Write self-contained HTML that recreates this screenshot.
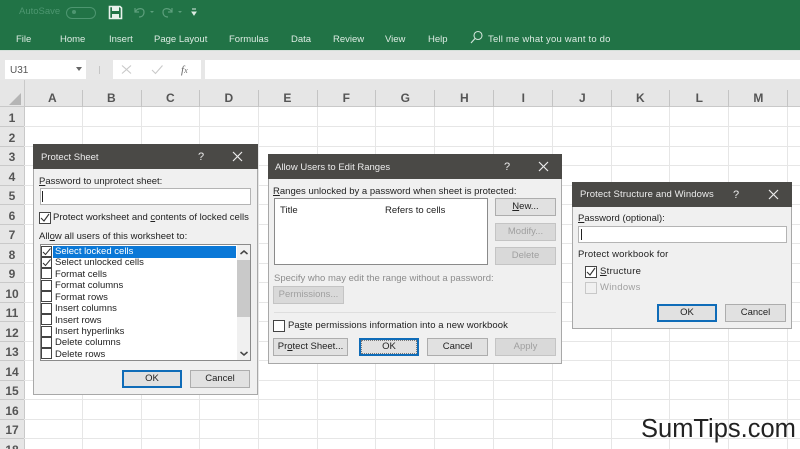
<!DOCTYPE html>
<html><head><meta charset="utf-8"><style>
html,body{margin:0;padding:0;background:#fff}
#r{position:relative;width:800px;height:449px;overflow:hidden;background:#fff;font-family:"Liberation Sans",sans-serif;font-size:9.5px;color:#222;filter:blur(.35px)}
#r div,#r span.a,#r svg{position:absolute}
.t{position:absolute;white-space:nowrap;line-height:12px}
.rb{color:#dcebe2;font-size:9.5px;top:34px;line-height:12px;position:absolute;white-space:nowrap}
.col{top:80px;height:27px;width:58.7px;text-align:center;line-height:37px;color:#555;font-size:12px;font-weight:bold;position:absolute}
.colbar{top:90px;height:17px;width:1px;background:#c4c4c4}
.row{left:0;width:24px;text-align:center;color:#555;font-size:12px;font-weight:bold;height:19.5px;line-height:22px;position:absolute}
.gh{left:24px;width:776px;height:1px;background:#e6e6e6}
.gv{top:107px;width:1px;height:342px;background:#e6e6e6}
.rh{left:0;width:24px;height:1px;background:#c9c9c9}
.dlg{background:#f0f0f0;border:1px solid #a8a8a8;box-sizing:border-box}
.tb{background:#4a4946;left:-1px;top:-1px;height:25px}
.tt{color:#ececec;font-size:9.5px}
.btn{background:#e1e1e1;border:1px solid #adadad;box-sizing:border-box;text-align:center;font-size:9.5px;line-height:16px;color:#222}
.dis{color:#a0a0a0;background:#d9d9d9;border-color:#c4c4c4}
.def{border:2px solid #0f6cb8;line-height:14px}
.cb{width:10px;height:10px;border:1px solid #444;background:#fff;box-sizing:content-box}
.ls{letter-spacing:.01px}
u{text-decoration:underline}
</style></head><body><div id="r">

<div style="left:0;top:0;width:800px;height:50px;background:#217346"></div>
<div style="left:0;top:50px;width:800px;height:1px;background:#d5e0da"></div>
<div style="left:0;top:51px;width:800px;height:29px;background:#e7e7e7"></div>
<span class="t" style="left:19px;top:6px;color:#4d9670;font-size:9.5px">AutoSave</span>
<div style="left:66px;top:7px;width:28px;height:10px;border:1px solid #4d9670;border-radius:7px"></div>
<div style="left:72px;top:10px;width:4px;height:4px;background:#4d9670;border-radius:3px"></div>
<svg style="left:108px;top:5px" width="15" height="15" viewBox="0 0 15 15"><path d="M1.500 1.500H12L13.500 3V13.500H1.500Z" fill="none" stroke="#e8f2ec" stroke-width="1.600"/><rect x="4" y="2" width="7" height="4" fill="#e8f2ec"/><rect x="4" y="9" width="7" height="4" fill="#e8f2ec"/></svg>
<svg style="left:132px;top:5px" width="70" height="14" viewBox="0 0 70 14"><path d="M3 3V7H7M3 7C6 2 12 3 12 7S9 12 7 12" fill="none" stroke="#5d9f7c" stroke-width="1.200"/><path d="M18 6l2 2 2-2" fill="#5d9f7c"/><path d="M40 3V7H36M40 7C37 2 31 3 31 7S34 12 36 12" fill="none" stroke="#5d9f7c" stroke-width="1.200"/><path d="M46 6l2 2 2-2" fill="#5d9f7c"/><path d="M60 4h4M60 7l2 3 2-3z" fill="#dcebe2" stroke="#dcebe2"/></svg>

<span class="rb" style="left:16px">File</span>
<span class="rb" style="left:60px">Home</span>
<span class="rb" style="left:109px">Insert</span>
<span class="rb" style="left:154px">Page Layout</span>
<span class="rb" style="left:229px">Formulas</span>
<span class="rb" style="left:291px">Data</span>
<span class="rb" style="left:333px">Review</span>
<span class="rb" style="left:385px">View</span>
<span class="rb" style="left:428px">Help</span>
<svg style="left:469px;top:30px" width="15" height="15" viewBox="0 0 15 15"><circle cx="9" cy="5.500" r="4" fill="none" stroke="#cfe3d8" stroke-width="1.100"/><path d="M6 8.500L2 13" stroke="#cfe3d8" stroke-width="1.200"/></svg>
<span class="rb" style="left:488px;letter-spacing:.2px">Tell me what you want to do</span>

<div style="left:5px;top:60px;width:81px;height:19px;background:#fff"></div>
<span class="t" style="left:10px;top:65px;color:#555;font-size:10px">U31</span>
<svg style="left:75px;top:66px" width="8" height="6"><path d="M1 1h6L4 5z" fill="#666"/></svg>
<div style="left:99px;top:66px;width:1px;height:8px;background:#c5c5c5"></div>
<div style="left:113px;top:60px;width:88px;height:19px;background:#fff"></div>
<svg style="left:121px;top:64px" width="70" height="12" viewBox="0 0 70 12"><path d="M1 1.500l9 8M10 1.500l-9 8" stroke="#c9c9c9" stroke-width="1.100"/><path d="M31 6l3.500 3.500 7-8" fill="none" stroke="#c9c9c9" stroke-width="1.100"/></svg>
<span class="t" style="left:181px;top:64px;font-family:'Liberation Serif',serif;font-style:italic;font-size:11px;color:#666">f<span style="font-size:8px">x</span></span>
<div style="left:205px;top:60px;width:595px;height:19px;background:#fff"></div>

<div style="left:0;top:80px;width:800px;height:27px;background:#e6e6e6"></div>
<div style="left:0;top:107px;width:24px;height:342px;background:#e6e6e6"></div>
<div style="left:0;top:106px;width:800px;height:1px;background:#c9c9c9"></div>
<div style="left:24px;top:80px;width:1px;height:369px;background:#c9c9c9"></div>
<svg style="left:8px;top:92px" width="14" height="14"><path d="M13 1V13H1Z" fill="#b5b5b5"/></svg>

<div class="col" style="left:23px">A</div><div class="col" style="left:82px">B</div><div class="col" style="left:141px">C</div><div class="col" style="left:199.500px">D</div><div class="col" style="left:258px">E</div><div class="col" style="left:317px">F</div><div class="col" style="left:376px">G</div><div class="col" style="left:435px">H</div><div class="col" style="left:494px">I</div><div class="col" style="left:553px">J</div><div class="col" style="left:611px">K</div><div class="col" style="left:670px">L</div><div class="col" style="left:729px">M</div>
<div class="colbar" style="left:82px"></div><div class="colbar" style="left:141px"></div><div class="colbar" style="left:199px"></div><div class="colbar" style="left:258px"></div><div class="colbar" style="left:317px"></div><div class="colbar" style="left:375px"></div><div class="colbar" style="left:434px"></div><div class="colbar" style="left:493px"></div><div class="colbar" style="left:552px"></div><div class="colbar" style="left:611px"></div><div class="colbar" style="left:669px"></div><div class="colbar" style="left:728px"></div><div class="colbar" style="left:787px"></div>

<div class="gv" style="left:82px"></div><div class="gv" style="left:141px"></div><div class="gv" style="left:199px"></div><div class="gv" style="left:258px"></div><div class="gv" style="left:317px"></div><div class="gv" style="left:375px"></div><div class="gv" style="left:434px"></div><div class="gv" style="left:493px"></div><div class="gv" style="left:552px"></div><div class="gv" style="left:611px"></div><div class="gv" style="left:669px"></div><div class="gv" style="left:728px"></div><div class="gv" style="left:787px"></div>

<div class="gh" style="top:126px"></div><div class="gh" style="top:146px"></div><div class="gh" style="top:165px"></div><div class="gh" style="top:185px"></div><div class="gh" style="top:204px"></div><div class="gh" style="top:224px"></div><div class="gh" style="top:243px"></div><div class="gh" style="top:263px"></div><div class="gh" style="top:282px"></div><div class="gh" style="top:302px"></div><div class="gh" style="top:321px"></div><div class="gh" style="top:341px"></div><div class="gh" style="top:360px"></div><div class="gh" style="top:380px"></div><div class="gh" style="top:399px"></div><div class="gh" style="top:419px"></div><div class="gh" style="top:438px"></div>
<div class="rh" style="top:126px"></div><div class="rh" style="top:146px"></div><div class="rh" style="top:165px"></div><div class="rh" style="top:185px"></div><div class="rh" style="top:204px"></div><div class="rh" style="top:224px"></div><div class="rh" style="top:243px"></div><div class="rh" style="top:263px"></div><div class="rh" style="top:282px"></div><div class="rh" style="top:302px"></div><div class="rh" style="top:321px"></div><div class="rh" style="top:341px"></div><div class="rh" style="top:360px"></div><div class="rh" style="top:380px"></div><div class="rh" style="top:399px"></div><div class="rh" style="top:419px"></div><div class="rh" style="top:438px"></div>

<div class="row" style="top:107px">1</div><div class="row" style="top:126.500px">2</div><div class="row" style="top:146px">3</div><div class="row" style="top:165.500px">4</div><div class="row" style="top:185px">5</div><div class="row" style="top:204.500px">6</div><div class="row" style="top:224px">7</div><div class="row" style="top:243.500px">8</div><div class="row" style="top:263px">9</div><div class="row" style="top:282.500px">10</div><div class="row" style="top:302px">11</div><div class="row" style="top:321.500px">12</div><div class="row" style="top:341px">13</div><div class="row" style="top:360.500px">14</div><div class="row" style="top:380px">15</div><div class="row" style="top:399.500px">16</div><div class="row" style="top:419px">17</div><div class="row" style="top:438.500px">18</div>

<!-- Protect Sheet -->
<div class="dlg" style="left:33px;top:144px;width:225px;height:251px">
 <div class="tb" style="width:225px"></div>
 <span class="t tt" style="left:7px;top:7px">Protect Sheet</span>
 <span class="t tt" style="left:164px;top:6px;font-size:11px">?</span>
 <svg style="left:198px;top:6px" width="11" height="11"><path d="M1 1l9 9M10 1l-9 9" stroke="#ececec" stroke-width="1.200"/></svg>
 <span class="t ls" style="left:5px;top:31px"><u>P</u>assword to unprotect sheet:</span>
 <div style="left:6px;top:43px;width:211px;height:17px;background:#fff;border:1px solid #b4b4b4;box-sizing:border-box"></div>
 <div style="left:8px;top:46px;width:1px;height:11px;background:#222"></div>
 <div class="cb" style="left:5px;top:67px"></div>
 <svg style="left:6px;top:68px" width="10" height="10"><path d="M1 5l3 3 5-7" fill="none" stroke="#333" stroke-width="1.100"/></svg>
 <span class="t ls" style="left:19px;top:67px">Protect worksheet and <u>c</u>ontents of locked cells</span>
 <span class="t ls" style="left:5px;top:86px">All<u>o</u>w all users of this worksheet to:</span>
 <div style="left:6px;top:99px;width:211px;height:117px;background:#fff;border:1px solid #8a8a8a;box-sizing:border-box"></div>
 <div style="left:19px;top:101px;width:183px;height:11.500px;background:#0a78d7"></div>
 <div style="left:203px;top:100px;width:13px;height:115px;background:#f0f0f0"></div>
 <div style="left:203px;top:115px;width:13px;height:57px;background:#c9c9c9"></div>
 <svg style="left:205px;top:104px" width="10" height="7"><path d="M1.500 5L5 2l3.500 3" fill="none" stroke="#444" stroke-width="1.500"/></svg>
 <svg style="left:205px;top:205px" width="10" height="7"><path d="M1.500 2L5 5l3.500-3" fill="none" stroke="#444" stroke-width="1.500"/></svg>

 <div class="cb" style="left:7px;top:101px;width:9px;height:9px"></div><svg style="left:8px;top:102px" width="10" height="10"><path d="M1 5l2.500 2.500L8.500 1.500" fill="none" stroke="#333" stroke-width="1"/></svg>
 <div class="cb" style="left:7px;top:112px;width:9px;height:9px"></div><svg style="left:8px;top:113px" width="10" height="10"><path d="M1 5l2.500 2.500L8.500 1.500" fill="none" stroke="#333" stroke-width="1"/></svg>
 <div class="cb" style="left:7px;top:123px;width:9px;height:9px"></div>
 <div class="cb" style="left:7px;top:135px;width:9px;height:9px"></div>
 <div class="cb" style="left:7px;top:146px;width:9px;height:9px"></div>
 <div class="cb" style="left:7px;top:158px;width:9px;height:9px"></div>
 <div class="cb" style="left:7px;top:169px;width:9px;height:9px"></div>
 <div class="cb" style="left:7px;top:181px;width:9px;height:9px"></div>
 <div class="cb" style="left:7px;top:192px;width:9px;height:9px"></div>
 <div class="cb" style="left:7px;top:203px;width:9px;height:9px"></div>

 <span class="t ls" style="left:21px;top:101px;color:#fff">Select locked cells</span>
 <span class="t ls" style="left:21px;top:112px">Select unlocked cells</span>
 <span class="t ls" style="left:21px;top:124px">Format cells</span>
 <span class="t ls" style="left:21px;top:135px">Format columns</span>
 <span class="t ls" style="left:21px;top:147px">Format rows</span>
 <span class="t ls" style="left:21px;top:158px">Insert columns</span>
 <span class="t ls" style="left:21px;top:170px">Insert rows</span>
 <span class="t ls" style="left:21px;top:181px">Insert hyperlinks</span>
 <span class="t ls" style="left:21px;top:192px">Delete columns</span>
 <span class="t ls" style="left:21px;top:204px">Delete rows</span>

 <div class="btn def" style="left:88px;top:225px;width:60px;height:18px">OK</div>
 <div class="btn" style="left:156px;top:225px;width:60px;height:18px">Cancel</div>
</div>

<!-- Allow Users -->
<div class="dlg" style="left:268px;top:154px;width:294px;height:210px">
 <div class="tb" style="width:294px"></div>
 <span class="t tt" style="left:6px;top:7px">Allow Users to Edit Ranges</span>
 <span class="t tt" style="left:235px;top:6px;font-size:11px">?</span>
 <svg style="left:269px;top:6px" width="11" height="11"><path d="M1 1l9 9M10 1l-9 9" stroke="#ececec" stroke-width="1.200"/></svg>
 <span class="t ls" style="left:4px;top:31px"><u>R</u>anges unlocked by a password when sheet is protected:</span>
 <div style="left:5px;top:43px;width:214px;height:67px;background:#fff;border:1px solid #8a8a8a;box-sizing:border-box"></div>
 <span class="t ls" style="left:11px;top:50px">Title</span>
 <span class="t ls" style="left:116px;top:50px">Refers to cells</span>
 <div class="btn" style="left:226px;top:43px;width:61px;height:18px"><u>N</u>ew...</div>
 <div class="btn dis" style="left:226px;top:68px;width:61px;height:18px">Modify...</div>
 <div class="btn dis" style="left:226px;top:92px;width:61px;height:18px">Delete</div>
 <span class="t ls" style="left:5px;top:118px;color:#8c8c8c">Specify who may edit the range without a password:</span>
 <div class="btn dis" style="left:4px;top:131px;width:71px;height:18px">Permissions...</div>
 <div style="left:5px;top:157px;width:282px;height:1px;background:#dedede"></div>
 <div class="cb" style="left:4px;top:165px"></div>
 <span class="t ls" style="left:19px;top:165px;letter-spacing:.07px">Pa<u>s</u>te permissions information into a new workbook</span>
 <div class="btn" style="left:4px;top:183px;width:75px;height:18px">Pr<u>o</u>tect Sheet...</div>
 <div class="btn def" style="left:90px;top:183px;width:60px;height:18px;outline:1px dotted #777;outline-offset:-3px">OK</div>
 <div class="btn" style="left:158px;top:183px;width:61px;height:18px">Cancel</div>
 <div class="btn dis" style="left:226px;top:183px;width:61px;height:18px">Apply</div>
</div>

<!-- Protect Structure -->
<div class="dlg" style="left:572px;top:182px;width:220px;height:147px">
 <div class="tb" style="width:220px"></div>
 <span class="t tt" style="left:7px;top:6px;letter-spacing:.1px">Protect Structure and Windows</span>
 <span class="t tt" style="left:160px;top:6px;font-size:11px">?</span>
 <svg style="left:195px;top:6px" width="11" height="11"><path d="M1 1l9 9M10 1l-9 9" stroke="#ececec" stroke-width="1.200"/></svg>
 <span class="t ls" style="left:5px;top:30px"><u>P</u>assword (optional):</span>
 <div style="left:5px;top:43px;width:209px;height:17px;background:#fff;border:1px solid #b4b4b4;box-sizing:border-box"></div>
 <div style="left:8px;top:46px;width:1px;height:11px;background:#222"></div>
 <span class="t ls" style="left:5px;top:66px;letter-spacing:.17px">Protect workbook for</span>
 <div class="cb" style="left:12px;top:83px"></div>
 <svg style="left:13px;top:84px" width="10" height="10"><path d="M1 5l3 3 5-7" fill="none" stroke="#333" stroke-width="1.100"/></svg>
 <span class="t ls" style="left:27px;top:83px;letter-spacing:.3px"><u>S</u>tructure</span>
 <div class="cb" style="left:12px;top:99px;background:#f0f0f0;border-color:#c8c8c8"></div>
 <span class="t ls" style="left:27px;top:99px;color:#a0a0a0;letter-spacing:.3px">Windows</span>
 <div class="btn def" style="left:84px;top:121px;width:60px;height:18px">OK</div>
 <div class="btn" style="left:152px;top:121px;width:61px;height:18px">Cancel</div>
</div>

<span class="t" style="left:641px;top:414px;font-size:25.5px;line-height:30px;color:#222">SumTips.com</span>
</div></body></html>
